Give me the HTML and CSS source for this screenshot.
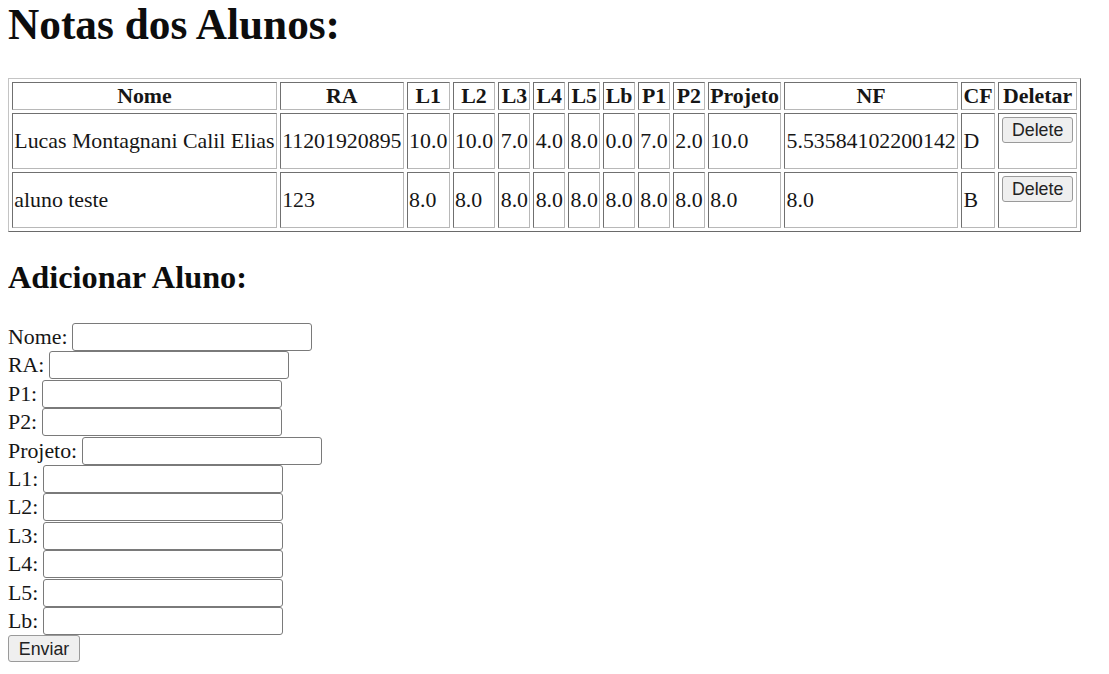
FILE: index.html
```html
<!DOCTYPE html>
<html lang="pt-BR">
<head>
<meta charset="utf-8">
<title>Notas dos Alunos</title>
<link rel="stylesheet" href="styles.css">
</head>
<body>
<h1 class="title">Notas dos Alunos:</h1>
<table class="grades">
  <thead>
    <tr>
      <th>Nome</th><th>RA</th><th>L1</th><th>L2</th><th>L3</th><th>L4</th><th>L5</th><th>Lb</th><th>P1</th><th>P2</th><th>Projeto</th><th>NF</th><th>CF</th><th>Deletar</th>
    </tr>
  </thead>
  <tbody>
    <tr>
      <td>Lucas Montagnani Calil Elias</td><td>11201920895</td><td>10.0</td><td>10.0</td><td>7.0</td><td>4.0</td><td>8.0</td><td>0.0</td><td>7.0</td><td>2.0</td><td>10.0</td><td>5.53584102200142</td><td>D</td>
      <td class="del-cell"><form class="del-form"><button type="button" class="btn del-btn">Delete</button></form></td>
    </tr>
    <tr>
      <td>aluno teste</td><td>123</td><td>8.0</td><td>8.0</td><td>8.0</td><td>8.0</td><td>8.0</td><td>8.0</td><td>8.0</td><td>8.0</td><td>8.0</td><td>8.0</td><td>B</td>
      <td class="del-cell"><form class="del-form"><button type="button" class="btn del-btn">Delete</button></form></td>
    </tr>
  </tbody>
</table>

<h2 class="subtitle">Adicionar Aluno:</h2>
<form class="add-form">
  <div class="field"><label>Nome:</label><input type="text" class="inp"></div>
  <div class="field"><label>RA:</label><input type="text" class="inp"></div>
  <div class="field"><label>P1:</label><input type="text" class="inp"></div>
  <div class="field"><label>P2:</label><input type="text" class="inp"></div>
  <div class="field"><label>Projeto:</label><input type="text" class="inp"></div>
  <div class="field"><label>L1:</label><input type="text" class="inp"></div>
  <div class="field"><label>L2:</label><input type="text" class="inp"></div>
  <div class="field"><label>L3:</label><input type="text" class="inp"></div>
  <div class="field"><label>L4:</label><input type="text" class="inp"></div>
  <div class="field"><label>L5:</label><input type="text" class="inp"></div>
  <div class="field"><label>Lb:</label><input type="text" class="inp"></div>
  <div class="submit-row"><button type="button" class="btn send-btn">Enviar</button></div>
</form>
</body>
</html>
```
FILE: styles.css
```css
html, body {
  background: #ffffff;
}
body {
  margin: 0 8px;
  font-family: "Liberation Serif", "Times New Roman", serif;
  font-size: 21.85px;
  color: #161616;
}
.title {
  font-size: 43.3px;
  font-weight: bold;
  margin: 0 0 28px 0;
  line-height: 1.149;
  color: #0d0d0d;
}
.grades {
  border: 1px solid;
  border-color: #c4c4c4 #6a6a6a #6a6a6a #c4c4c4;
  border-spacing: 3px;
  border-collapse: separate;
}
.grades th,
.grades td {
  border: 1px solid;
  border-color: #707070 #b8b8b8 #b8b8b8 #707070;
  padding: 1px 1.3px;
  line-height: 24px;
}
.grades th {
  font-weight: bold;
  text-align: center;
}
.grades td {
  text-align: left;
  vertical-align: middle;
}
.del-form {
  margin: 0;
}
.btn {
  font-family: "Liberation Sans", Arial, sans-serif;
  font-size: 17.8px;
  color: #222222;
  background: #efefef;
  border: 1px solid #9a9a9a;
  border-radius: 3px;
  height: 26px;
  line-height: 22px;
}
.del-btn {
  display: block;
  margin: 2px 2px 24px 2px;
  width: 71px;
  padding: 0;
}
.subtitle {
  font-size: 32.3px;
  font-weight: bold;
  margin: 27px 0 27px 0;
  line-height: 1.149;
  color: #0d0d0d;
}
.add-form {
  display: flex;
  flex-direction: column;
}
.field {
  display: flex;
  align-items: center;
  height: 28.4px;
  gap: 5px;
}
.field label {
  line-height: 24px;
}
.inp {
  box-sizing: border-box;
  width: 240px;
  height: 28px;
  border: 1px solid #7a7a7a;
  border-radius: 3px;
  background: #ffffff;
  padding: 1px 2px;
  margin: 0;
  font-family: "Liberation Sans", Arial, sans-serif;
  font-size: 17.8px;
}
.submit-row {
  display: flex;
}
.send-btn {
  width: 72px;
  height: 27px;
  padding: 0;
}
```
